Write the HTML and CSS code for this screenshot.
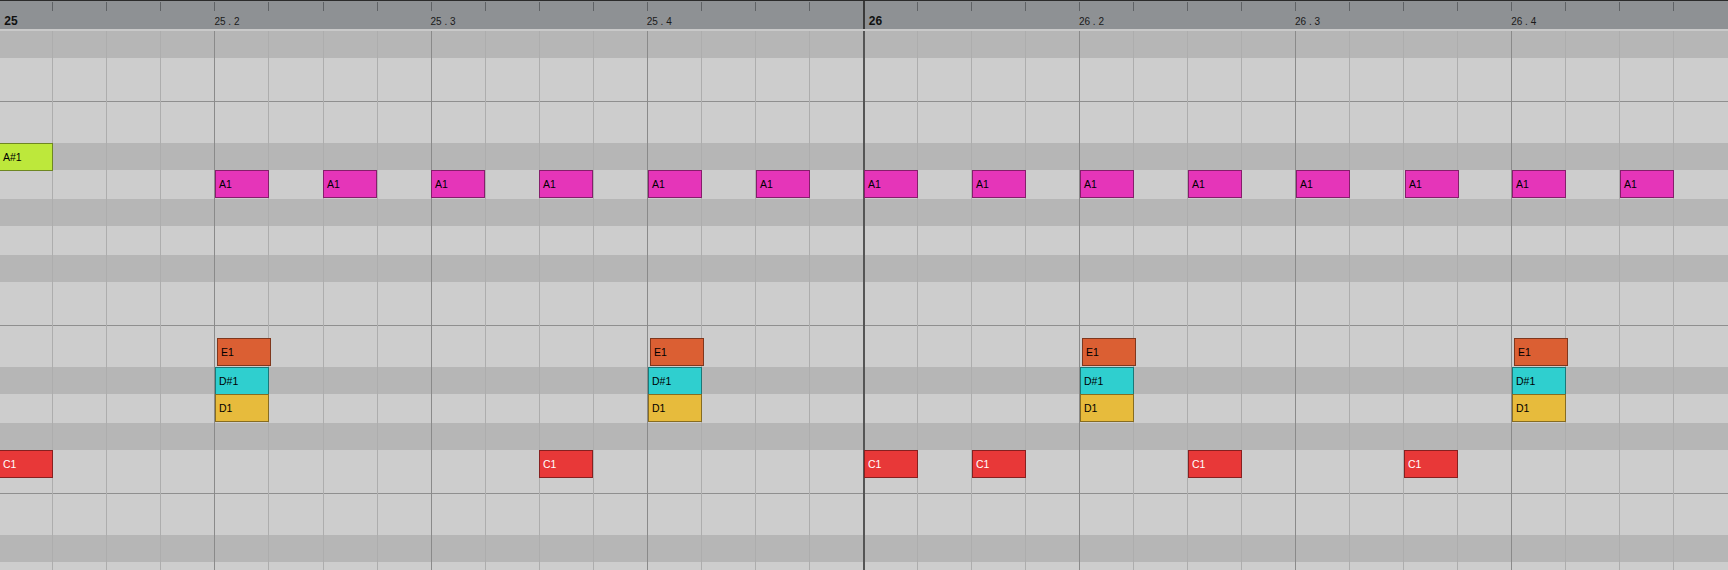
FILE: index.html
```html
<!DOCTYPE html>
<html>
    <head>
        <meta name="viewport" content="width=device-width"/>
        <title>Piano roll</title>
        <link rel="stylesheet" href="styles.css">
    </head>
    <body>
        <div class="roll">
            <!-- ruler: 32 sixteenths, 2 bars -->
            <div class="ruler">
                <div class="cell bar"><span class="bar-label">25</span></div>
                <div class="cell"></div>
                <div class="cell"></div>
                <div class="cell"></div>
                <div class="cell"><span class="beat-label">25 . 2</span></div>
                <div class="cell"></div>
                <div class="cell"></div>
                <div class="cell"></div>
                <div class="cell"><span class="beat-label">25 . 3</span></div>
                <div class="cell"></div>
                <div class="cell"></div>
                <div class="cell"></div>
                <div class="cell"><span class="beat-label">25 . 4</span></div>
                <div class="cell"></div>
                <div class="cell"></div>
                <div class="cell"></div>
                <div class="cell bar"><span class="bar-label">26</span></div>
                <div class="cell"></div>
                <div class="cell"></div>
                <div class="cell"></div>
                <div class="cell"><span class="beat-label">26 . 2</span></div>
                <div class="cell"></div>
                <div class="cell"></div>
                <div class="cell"></div>
                <div class="cell"><span class="beat-label">26 . 3</span></div>
                <div class="cell"></div>
                <div class="cell"></div>
                <div class="cell"></div>
                <div class="cell"><span class="beat-label">26 . 4</span></div>
                <div class="cell"></div>
                <div class="cell"></div>
                <div class="cell"></div>
            </div>

            <div class="lanes">
                <div class="key black"></div>
                <div class="key upper"></div>
                <div class="key lower"></div>
                <div class="key black"></div>
                <div class="key white"></div>
                <div class="key black"></div>
                <div class="key white"></div>
                <div class="key black"></div>
                <div class="key upper"></div>
                <div class="key lower"></div>
                <div class="key black"></div>
                <div class="key white"></div>
                <div class="key black"></div>
                <div class="key upper"></div>
                <div class="key lower"></div>
                <div class="key black"></div>
                <div class="key rest"></div>

                <!-- vertical grid, drawn over the key rows -->
                <div class="grid">
                    <i class="bar"></i><i></i><i></i><i></i>
                    <i class="beat"></i><i></i><i></i><i></i>
                    <i class="beat"></i><i></i><i></i><i></i>
                    <i class="beat"></i><i></i><i></i><i></i>
                    <i class="bar"></i><i></i><i></i><i></i>
                    <i class="beat"></i><i></i><i></i><i></i>
                    <i class="beat"></i><i></i><i></i><i></i>
                    <i class="beat"></i><i></i><i></i><i></i>
                </div>

                <div class="note as1" style="left:-1px">A#1</div>

                <div class="note a1" style="left:215px">A1</div>
                <div class="note a1" style="left:323px">A1</div>
                <div class="note a1" style="left:431px">A1</div>
                <div class="note a1" style="left:539px">A1</div>
                <div class="note a1" style="left:648px">A1</div>
                <div class="note a1" style="left:756px">A1</div>
                <div class="note a1" style="left:864px">A1</div>
                <div class="note a1" style="left:972px">A1</div>
                <div class="note a1" style="left:1080px">A1</div>
                <div class="note a1" style="left:1188px">A1</div>
                <div class="note a1" style="left:1296px">A1</div>
                <div class="note a1" style="left:1405px">A1</div>
                <div class="note a1" style="left:1512px">A1</div>
                <div class="note a1" style="left:1620px">A1</div>

                <div class="note e1" style="left:217px">E1</div>
                <div class="note e1" style="left:650px">E1</div>
                <div class="note e1" style="left:1082px">E1</div>
                <div class="note e1" style="left:1514px">E1</div>

                <div class="note ds1" style="left:215px">D#1</div>
                <div class="note ds1" style="left:648px">D#1</div>
                <div class="note ds1" style="left:1080px">D#1</div>
                <div class="note ds1" style="left:1512px">D#1</div>

                <div class="note d1" style="left:215px">D1</div>
                <div class="note d1" style="left:648px">D1</div>
                <div class="note d1" style="left:1080px">D1</div>
                <div class="note d1" style="left:1512px">D1</div>

                <div class="note c1" style="left:-1px">C1</div>
                <div class="note c1" style="left:539px">C1</div>
                <div class="note c1" style="left:864px">C1</div>
                <div class="note c1" style="left:972px">C1</div>
                <div class="note c1" style="left:1188px">C1</div>
                <div class="note c1" style="left:1404px">C1</div>
            </div>
        </div>
    </body>
</html>
```

FILE: styles.css
```css
body {
    margin: 0;
    background: #cdcdcd;
    overflow: hidden;
    font-family: "Liberation Sans", Arial, sans-serif;
}
.roll {
    width: 1728px;
    height: 570px;
    overflow: hidden;
    display: flex;
    flex-direction: column;
}

/* ruler */
.ruler {
    flex: 0 0 auto;
    display: flex;
    height: 31px;
    box-sizing: border-box;
    border-top: 1px solid #2b2b2b;
    border-bottom: 2px solid #c9c9c9;
    background: #8e9194;
    margin-left: -1.7px; /* bar 25 sits just off the left edge */
}
.ruler .cell {
    position: relative;
    flex: 0 0 54.04px;
    height: 100%;
}
.ruler .cell::before {
    content: "";
    position: absolute;
    left: 0;
    top: 1px;
    width: 1px;
    height: 9px;
    background: #5f6265;
}
.ruler .cell.bar::before {
    top: 0;
    width: 2px;
    height: 100%;
    background: #3a3a3a;
}
.beat-label {
    position: absolute;
    left: 0;
    top: 15px;
    font-size: 10px;
    color: #1a1a1a;
    white-space: nowrap;
}
.bar-label {
    position: absolute;
    left: 6px;
    top: 13px;
    font-size: 12px;
    font-weight: bold;
    color: #111;
}

/* key rows */
.lanes {
    position: relative;
    flex: 1 1 auto;
    display: flex;
    flex-direction: column;
}
.key {
    flex: 0 0 auto;
    box-sizing: border-box;
    background: #cdcdcd;
}
.key.black {
    height: 27px;
    background: #b6b6b6;
}
.key.white {
    height: 29px;
}
.key.upper {
    height: 44px;
    border-bottom: 1px solid #8f8f8f;
}
.key.lower {
    height: 41px;
}
.key.rest {
    flex: 1 1 auto;
}

/* vertical grid lines */
.grid {
    position: absolute;
    top: 0;
    bottom: 0;
    left: -1.7px;
    display: flex;
    pointer-events: none;
}
.grid i {
    flex: 0 0 54.04px;
    box-sizing: border-box;
    border-left: 1px solid #adadad;
}
.grid i.beat {
    border-left-color: #8a8a8a;
}
.grid i.bar {
    border-left: 2px solid #555;
}

/* notes */
.note {
    position: absolute;
    width: 54px;
    height: 28px;
    box-sizing: border-box;
    border: 1px solid rgba(0, 0, 0, .42);
    padding-left: 3px;
    display: flex;
    align-items: center;
    font-size: 10.5px;
    color: #000;
    white-space: nowrap;
}
.note.as1 {
    top: 112px;
    background: #bde83b;
}
.note.a1 {
    top: 139px;
    background: #e535b9;
}
.note.e1 {
    top: 307px;
    background: #db5f33;
}
.note.ds1 {
    top: 336px;
    background: #2fcfcf;
}
.note.d1 {
    top: 363px;
    background: #e7bb3c;
}
.note.c1 {
    top: 419px;
    background: #e83838;
    color: #fff;
}
```
